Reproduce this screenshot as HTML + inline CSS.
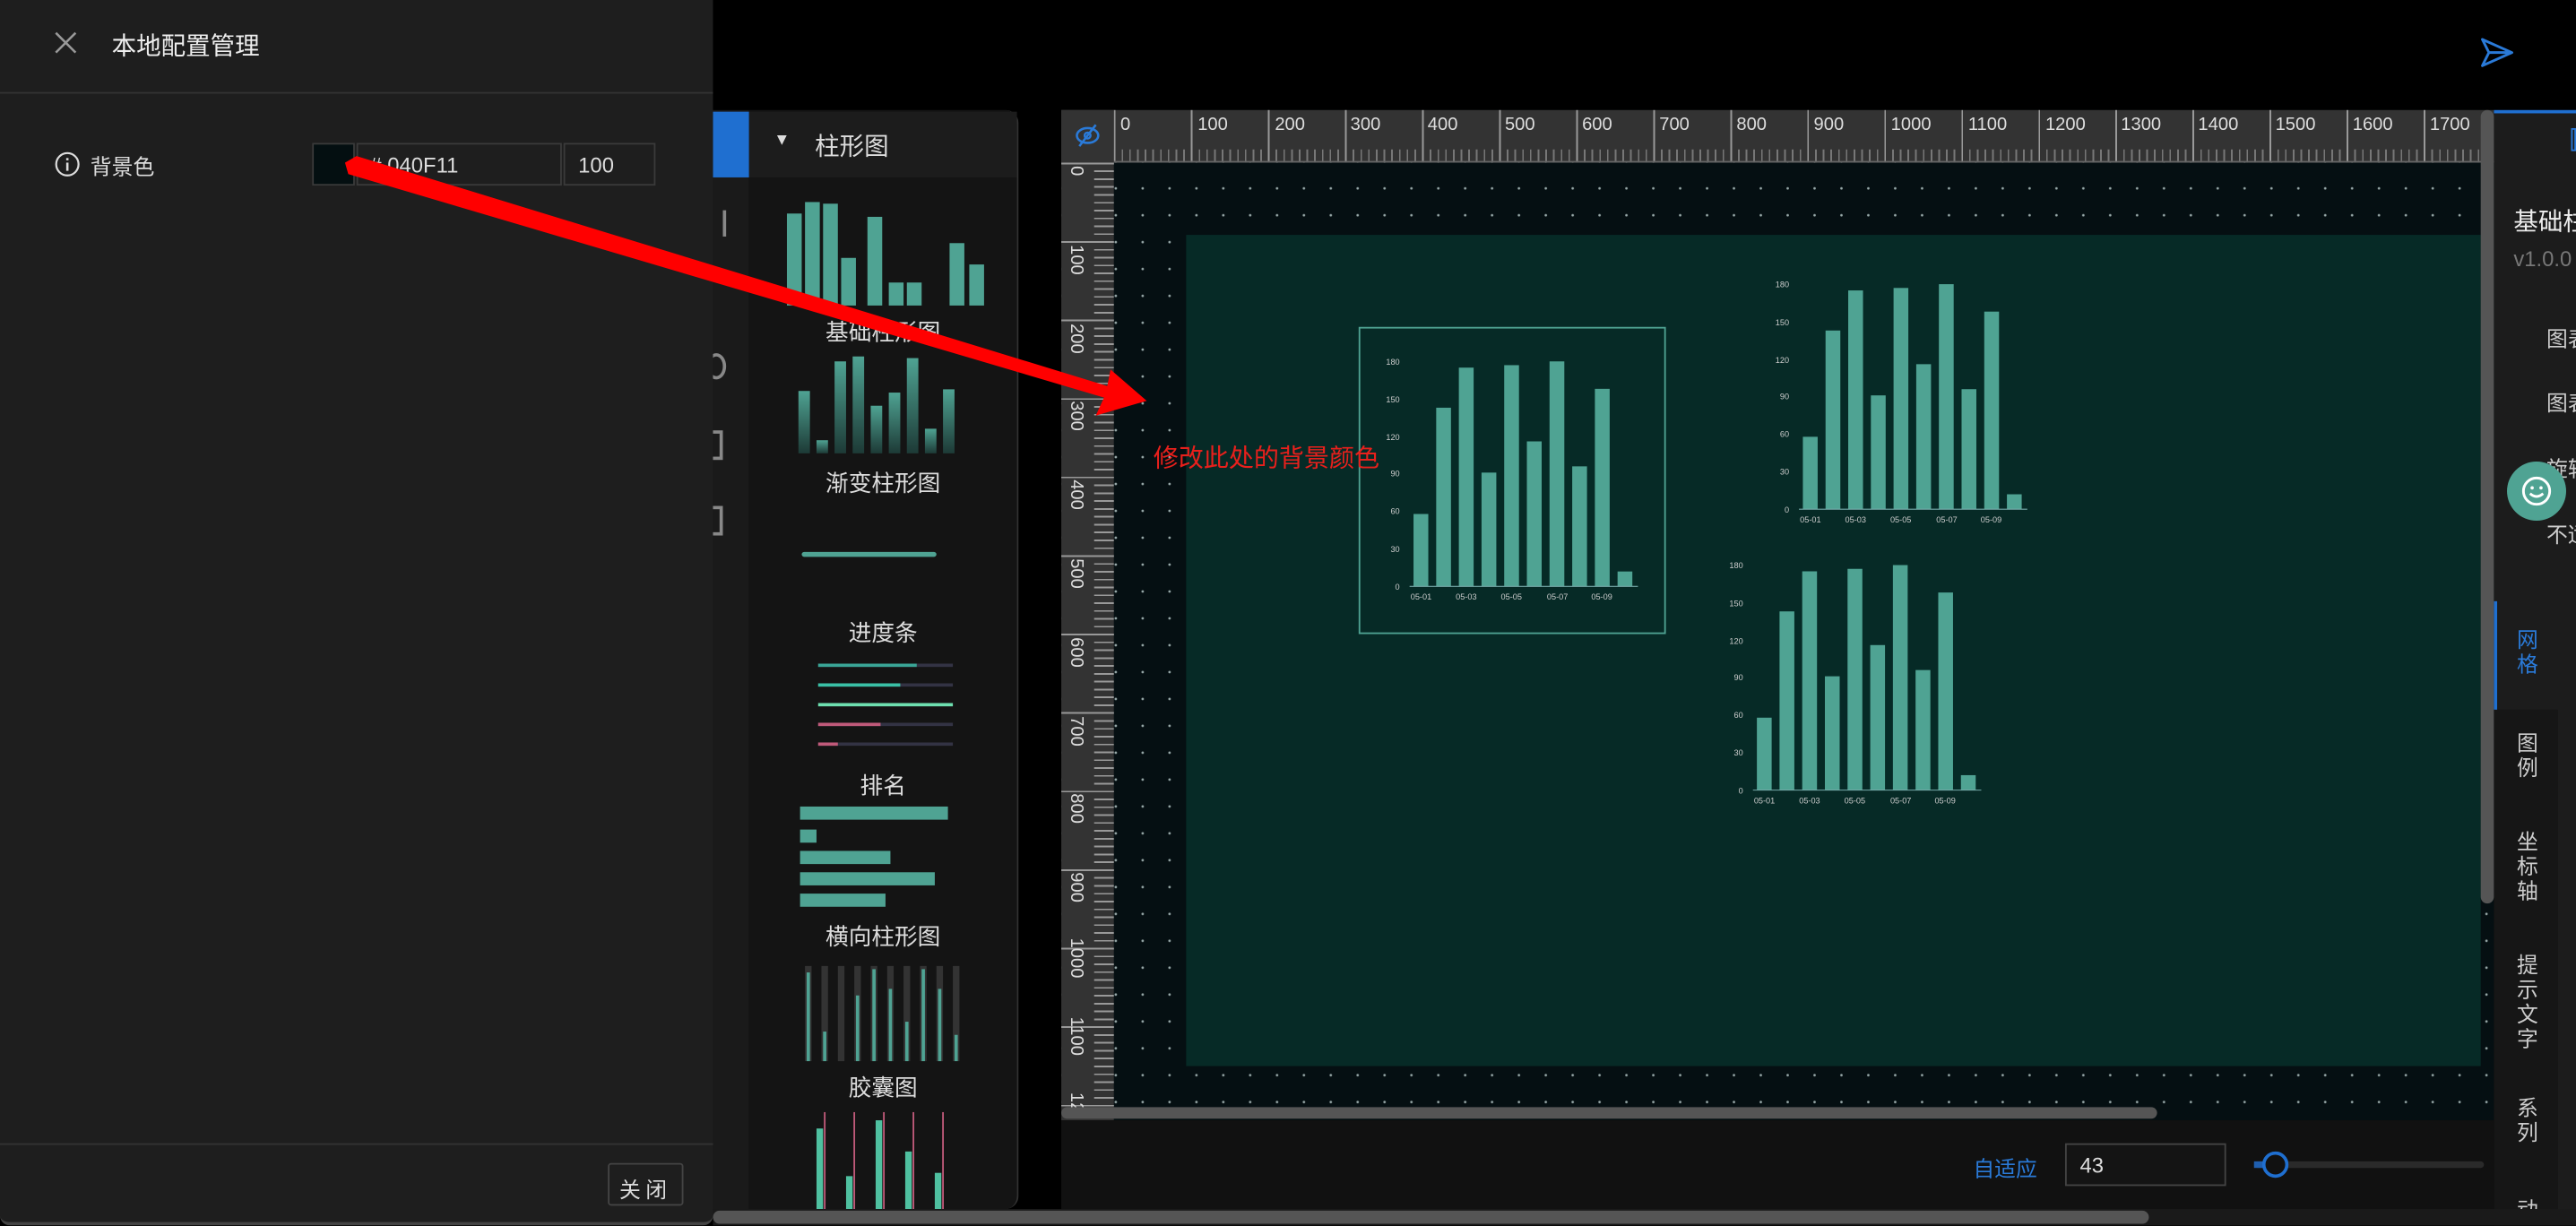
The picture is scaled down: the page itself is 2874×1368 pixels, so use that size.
<!DOCTYPE html>
<html><head><meta charset="utf-8">
<style>
*{margin:0;padding:0;box-sizing:border-box}
html,body{width:2874px;height:1368px;overflow:hidden;background:#000}
#w{position:absolute;left:0;top:0;width:1568px;height:746px;transform:scale(1.83291);transform-origin:0 0;font-family:"Liberation Sans","Noto Sans CJK SC",sans-serif;color:#ddd}
.a{position:absolute}
.t{position:absolute;white-space:nowrap}
.lbl{position:absolute;font-size:14px;color:#ddd;width:163px;text-align:center;left:456px}
</style></head><body><div id="w">

<!-- right panel -->
<div class="a" style="left:1518px;top:67px;width:50px;height:679px;background:#1c1c1c;border-top:2px solid #1f6fd0"></div>
<div class="a" style="left:1565px;top:78px;width:3px;height:14px;border:1px solid #2a7ad8"></div>
<div class="t" style="left:1530px;top:124px;font-size:15px;color:#eee">基础柱</div>
<div class="t" style="left:1530px;top:150px;font-size:13px;color:#777">v1.0.0</div>
<div class="t" style="left:1550px;top:196px;font-size:13px;color:#ccc">图表</div>
<div class="t" style="left:1550px;top:235px;font-size:13px;color:#ccc">图表</div>
<div class="t" style="left:1550px;top:275px;font-size:13px;color:#ccc">旋转</div>
<div class="t" style="left:1550px;top:315px;font-size:13px;color:#ccc">不适</div>
<div class="a" style="left:1518px;top:432px;width:39px;height:314px;background:#161616"></div>
<div class="a" style="left:1518px;top:366px;width:2px;height:66px;background:#1f6fd0"></div>
<div class="t" style="left:1532px;top:382px;font-size:13px;line-height:15px;color:#2a7ad8;width:14px;white-space:normal">网格</div>
<div class="t" style="left:1532px;top:445px;font-size:13px;line-height:15px;color:#ccc;width:14px;white-space:normal">图例</div>
<div class="t" style="left:1532px;top:505px;font-size:13px;line-height:15px;color:#ccc;width:14px;white-space:normal">坐标轴</div>
<div class="t" style="left:1532px;top:580px;font-size:13px;line-height:15px;color:#ccc;width:14px;white-space:normal">提示文字</div>
<div class="t" style="left:1532px;top:667px;font-size:13px;line-height:15px;color:#ccc;width:14px;white-space:normal">系列</div>
<div class="t" style="left:1532px;top:729px;font-size:13px;line-height:15px;color:#ccc">动</div>
<div class="a" style="left:1526px;top:281px;width:36px;height:36px;border-radius:50%;background:#4fa393"></div>
<svg class="a" style="left:1533px;top:288px" width="22" height="22" viewBox="0 0 22 22"><circle cx="11" cy="11" r="8" fill="none" stroke="#fff" stroke-width="1.6"/><path d="M7 12.5q4 3.5 8 0" fill="none" stroke="#fff" stroke-width="1.6"/><circle cx="8.3" cy="9" r="1" fill="#fff"/><circle cx="13.7" cy="9" r="1" fill="#fff"/></svg>
<svg class="a" style="left:1509px;top:22px" width="22" height="20" viewBox="0 0 22 20"><path d="M2 2L20 10L2 18L6 10Z M6 10H20" fill="none" stroke="#2a7ad8" stroke-width="1.6" stroke-linejoin="round"/></svg>

<!-- canvas -->
<div class="a" style="left:646px;top:67px;width:872px;height:615px;background:#050f12;background-image:radial-gradient(circle,#9aa 0.6px,transparent 0.9px);background-size:16.37px 16.37px;background-position:25px 39.5px"></div>
<div class="a" style="left:722px;top:143px;width:788px;height:506px;background:#062a26"></div>
<div class="a" style="left:646px;top:67px;width:872px;height:32px;background:#333"></div>
<div class="a" style="left:646px;top:67px;width:32px;height:615px;background:#333"></div>
<div class="a" style="left:678px;top:88px;width:832px;height:11px;background-image:repeating-linear-gradient(90deg,#888 0 1px,transparent 1px 4.69px);opacity:.8;clip-path:inset(3px 0 0 0)"></div>
<div class="a" style="left:678px;top:67px;width:832px;height:32px;background-image:repeating-linear-gradient(90deg,#999 0 1px,transparent 1px 46.9px)"></div>
<div class="a" style="left:666px;top:99px;width:12px;height:575px;background-image:repeating-linear-gradient(180deg,#999 0 1px,transparent 1px 4.78px)"></div>
<div class="a" style="left:646px;top:99px;width:32px;height:575px;background-image:repeating-linear-gradient(180deg,#999 0 1px,transparent 1px 47.8px)"></div>
<div class="a" style="left:646px;top:98px;width:872px;height:1px;background:#666"></div>
<div style="position:absolute;left:0;top:0;font-size:11px;color:#ddd">
<span class="t" style="left:682px;top:70px">0</span><span class="t" style="left:729px;top:70px">100</span><span class="t" style="left:776px;top:70px">200</span><span class="t" style="left:822px;top:70px">300</span><span class="t" style="left:869px;top:70px">400</span><span class="t" style="left:916px;top:70px">500</span><span class="t" style="left:963px;top:70px">600</span><span class="t" style="left:1010px;top:70px">700</span><span class="t" style="left:1057px;top:70px">800</span><span class="t" style="left:1104px;top:70px">900</span><span class="t" style="left:1151px;top:70px">1000</span><span class="t" style="left:1198px;top:70px">1100</span><span class="t" style="left:1245px;top:70px">1200</span><span class="t" style="left:1291px;top:70px">1300</span><span class="t" style="left:1338px;top:70px">1400</span><span class="t" style="left:1385px;top:70px">1500</span><span class="t" style="left:1432px;top:70px">1600</span><span class="t" style="left:1479px;top:70px">1700</span>
</div>
<div style="position:absolute;left:0;top:0;font-size:11px;color:#ddd">
<span class="t" style="top:101px;transform:rotate(90deg);transform-origin:0 0;left:661px">0</span>
<span class="t" style="left:661px;top:149px;transform:rotate(90deg);transform-origin:0 0">100</span>
<span class="t" style="left:661px;top:197px;transform:rotate(90deg);transform-origin:0 0">200</span>
<span class="t" style="left:661px;top:244px;transform:rotate(90deg);transform-origin:0 0">300</span>
<span class="t" style="left:661px;top:292px;transform:rotate(90deg);transform-origin:0 0">400</span>
<span class="t" style="left:661px;top:340px;transform:rotate(90deg);transform-origin:0 0">500</span>
<span class="t" style="left:661px;top:388px;transform:rotate(90deg);transform-origin:0 0">600</span>
<span class="t" style="left:661px;top:436px;transform:rotate(90deg);transform-origin:0 0">700</span>
<span class="t" style="left:661px;top:483px;transform:rotate(90deg);transform-origin:0 0">800</span>
<span class="t" style="left:661px;top:531px;transform:rotate(90deg);transform-origin:0 0">900</span>
<span class="t" style="left:661px;top:571px;transform:rotate(90deg);transform-origin:0 0">1000</span>
<span class="t" style="left:661px;top:619px;transform:rotate(90deg);transform-origin:0 0">1100</span>
<span class="t" style="left:661px;top:665px;transform:rotate(90deg);transform-origin:0 0">12</span>
</div>
<div class="a" style="left:646px;top:67px;width:32px;height:32px;background:#333"></div>
<svg class="a" style="left:654px;top:74px" width="16" height="16" viewBox="0 0 16 16"><ellipse cx="8" cy="8.5" rx="6.5" ry="4.5" fill="none" stroke="#2a7ad8" stroke-width="1.4"/><circle cx="8" cy="8.5" r="1.8" fill="none" stroke="#2a7ad8" stroke-width="1.3"/><path d="M13 2L3 15" stroke="#2a7ad8" stroke-width="1.4"/></svg>
<div class="a" style="left:1510px;top:67px;width:8px;height:483px;background:#555;border-radius:4px"></div>
<div class="a" style="left:646px;top:674px;width:667px;height:7px;background:#555;border-radius:4px"></div>

<!-- charts -->
<div class="a" style="left:827px;top:199px;width:187px;height:187px;border:1px solid #4fa393"></div>
<svg class="a" style="left:838px;top:210px" width="160" height="160" viewBox="0 0 160 160"><g fill="#4fa393"><rect x="22.4" y="102.9" width="9" height="44.1"/><rect x="36.2" y="38.2" width="9" height="108.8"/><rect x="50" y="13.8" width="9" height="133.2"/><rect x="63.8" y="77.7" width="9" height="69.3"/><rect x="77.6" y="12.3" width="9" height="134.7"/><rect x="91.4" y="58.7" width="9" height="88.3"/><rect x="105.2" y="10" width="9" height="137"/><rect x="119" y="73.9" width="9" height="73.1"/><rect x="132.8" y="26.7" width="9" height="120.3"/><rect x="146.6" y="137.9" width="9" height="9.1"/></g><line x1="20" y1="147" x2="159" y2="147" stroke="#7aa" stroke-width=".6"/><g fill="#ccc" font-size="5" text-anchor="end" font-family="Liberation Sans"><text x="14" y="12">180</text><text x="14" y="35">150</text><text x="14" y="58">120</text><text x="14" y="80">90</text><text x="14" y="103">60</text><text x="14" y="126">30</text><text x="14" y="149">0</text></g><g fill="#ccc" font-size="5" text-anchor="middle" font-family="Liberation Sans"><text x="27" y="155">05-01</text><text x="54.5" y="155">05-03</text><text x="82" y="155">05-05</text><text x="110" y="155">05-07</text><text x="137" y="155">05-09</text></g></svg>
<svg class="a" style="left:1075px;top:163px" width="160" height="160" viewBox="0 0 160 160"><g fill="#4fa393"><rect x="22.4" y="102.9" width="9" height="44.1"/><rect x="36.2" y="38.2" width="9" height="108.8"/><rect x="50" y="13.8" width="9" height="133.2"/><rect x="63.8" y="77.7" width="9" height="69.3"/><rect x="77.6" y="12.3" width="9" height="134.7"/><rect x="91.4" y="58.7" width="9" height="88.3"/><rect x="105.2" y="10" width="9" height="137"/><rect x="119" y="73.9" width="9" height="73.1"/><rect x="132.8" y="26.7" width="9" height="120.3"/><rect x="146.6" y="137.9" width="9" height="9.1"/></g><line x1="20" y1="147" x2="159" y2="147" stroke="#7aa" stroke-width=".6"/><g fill="#ccc" font-size="5" text-anchor="end" font-family="Liberation Sans"><text x="14" y="12">180</text><text x="14" y="35">150</text><text x="14" y="58">120</text><text x="14" y="80">90</text><text x="14" y="103">60</text><text x="14" y="126">30</text><text x="14" y="149">0</text></g><g fill="#ccc" font-size="5" text-anchor="middle" font-family="Liberation Sans"><text x="27" y="155">05-01</text><text x="54.5" y="155">05-03</text><text x="82" y="155">05-05</text><text x="110" y="155">05-07</text><text x="137" y="155">05-09</text></g></svg>
<svg class="a" style="left:1047px;top:334px" width="160" height="160" viewBox="0 0 160 160"><g fill="#4fa393"><rect x="22.4" y="102.9" width="9" height="44.1"/><rect x="36.2" y="38.2" width="9" height="108.8"/><rect x="50" y="13.8" width="9" height="133.2"/><rect x="63.8" y="77.7" width="9" height="69.3"/><rect x="77.6" y="12.3" width="9" height="134.7"/><rect x="91.4" y="58.7" width="9" height="88.3"/><rect x="105.2" y="10" width="9" height="137"/><rect x="119" y="73.9" width="9" height="73.1"/><rect x="132.8" y="26.7" width="9" height="120.3"/><rect x="146.6" y="137.9" width="9" height="9.1"/></g><line x1="20" y1="147" x2="159" y2="147" stroke="#7aa" stroke-width=".6"/><g fill="#ccc" font-size="5" text-anchor="end" font-family="Liberation Sans"><text x="14" y="12">180</text><text x="14" y="35">150</text><text x="14" y="58">120</text><text x="14" y="80">90</text><text x="14" y="103">60</text><text x="14" y="126">30</text><text x="14" y="149">0</text></g><g fill="#ccc" font-size="5" text-anchor="middle" font-family="Liberation Sans"><text x="27" y="155">05-01</text><text x="54.5" y="155">05-03</text><text x="82" y="155">05-05</text><text x="110" y="155">05-07</text><text x="137" y="155">05-09</text></g></svg>
<div class="t" style="left:702px;top:267px;font-size:15.3px;color:#e8201c">修改此处的背景颜色</div>

<!-- bottom bar -->
<div class="a" style="left:646px;top:682px;width:872px;height:64px;background:#111"></div>
<div class="t" style="left:1201px;top:701px;font-size:13px;color:#2a7ad8">自适应</div>
<div class="a" style="left:1257px;top:696px;width:98px;height:26px;border:1px solid #444;background:#141414;font-size:13px;color:#ddd;padding:5px 0 0 8px">43</div>
<div class="a" style="left:1372px;top:707px;width:140px;height:4px;background:#2a2a2a;border-radius:2px"></div>
<div class="a" style="left:1372px;top:707px;width:14px;height:4px;background:#1f5fb0"></div>
<div class="a" style="left:1377px;top:701px;width:16px;height:16px;border-radius:50%;border:2px solid #1f6fd0;background:#111"></div>

<!-- icon bar -->
<div class="a" style="left:434px;top:67px;width:22px;height:669px;background:#1a1a1a"></div>
<div class="a" style="left:434px;top:68px;width:22px;height:40px;background:#1f6fd0"></div>
<div class="a" style="left:434px;top:128px;width:8px;height:16px;border-right:2px solid #888"></div>
<div class="a" style="left:430px;top:215px;width:12px;height:16px;border:2px solid #888;border-radius:50%"></div>
<div class="a" style="left:430px;top:262px;width:10px;height:18px;border:2px solid #888"></div>
<div class="a" style="left:430px;top:308px;width:10px;height:18px;border:2px solid #888"></div>

<!-- component panel -->
<div class="a" style="left:456px;top:67px;width:164px;height:669px;background:#141414;border-radius:0 8px 8px 0;border-right:1px solid #333"></div>
<div class="a" style="left:456px;top:68px;width:163px;height:40px;background:#1c1c1c"></div>
<div class="t" style="left:471px;top:80px;font-size:10px;color:#ddd">▼</div>
<div class="t" style="left:496px;top:78px;font-size:15px;color:#ddd">柱形图</div>
<svg class="a" style="left:476px;top:118px" width="126" height="70"><g fill="#4fa393"><rect x="3" y="12" width="9" height="56"/><rect x="14" y="5" width="9" height="63"/><rect x="25" y="6" width="9" height="62"/><rect x="36" y="39" width="9" height="29"/><rect x="52" y="14" width="9" height="54"/><rect x="65" y="54" width="9" height="14"/><rect x="76" y="54" width="9" height="14"/><rect x="102" y="30" width="9" height="38"/><rect x="114" y="43" width="9" height="25"/></g></svg>
<div class="lbl" style="top:192px">基础柱形图</div>
<svg class="a" style="left:484px;top:212px" width="106" height="66"><defs><linearGradient id="g" x1="0" y1="0" x2="0" y2="1"><stop offset="0" stop-color="#4fa393"/><stop offset="1" stop-color="#1d3a36"/></linearGradient></defs><g fill="url(#g)"><rect x="2" y="26" width="7" height="38"/><rect x="13" y="56" width="7" height="8"/><rect x="24" y="8" width="7" height="56"/><rect x="35" y="5" width="7" height="59"/><rect x="46" y="35" width="7" height="29"/><rect x="57" y="27" width="7" height="37"/><rect x="68" y="6" width="7" height="58"/><rect x="79" y="49" width="7" height="15"/><rect x="90" y="25" width="7" height="39"/></g></svg>
<div class="lbl" style="top:284px">渐变柱形图</div>
<div class="a" style="left:488px;top:336px;width:82px;height:3px;background:#4fa393;border-radius:2px"></div>
<div class="lbl" style="top:375px">进度条</div>
<div class="a" style="left:498px;top:404px;width:82px;height:2px;background:#334"></div><div class="a" style="left:498px;top:404px;width:60px;height:2px;background:#3aa596"></div>
<div class="a" style="left:498px;top:416px;width:82px;height:2px;background:#334"></div><div class="a" style="left:498px;top:416px;width:50px;height:2px;background:#3ac0a6"></div>
<div class="a" style="left:498px;top:428px;width:82px;height:2px;background:#6ee0b0"></div>
<div class="a" style="left:498px;top:440px;width:82px;height:2px;background:#334"></div><div class="a" style="left:498px;top:440px;width:38px;height:2px;background:#c05a7a"></div>
<div class="a" style="left:498px;top:452px;width:82px;height:2px;background:#334"></div><div class="a" style="left:498px;top:452px;width:12px;height:2px;background:#c05a7a"></div>
<div class="lbl" style="top:468px">排名</div>
<div class="a" style="left:487px;top:491px;width:90px;height:8px;background:#4fa393"></div>
<div class="a" style="left:487px;top:505px;width:10px;height:8px;background:#4fa393"></div>
<div class="a" style="left:487px;top:518px;width:55px;height:8px;background:#4fa393"></div>
<div class="a" style="left:487px;top:531px;width:82px;height:8px;background:#4fa393"></div>
<div class="a" style="left:487px;top:544px;width:52px;height:8px;background:#4fa393"></div>
<div class="lbl" style="top:560px">横向柱形图</div>
<svg class="a" style="left:488px;top:588px" width="100" height="60"><g fill="#333"><rect x="2" y="0" width="4" height="58"/><rect x="12" y="0" width="4" height="58"/><rect x="22" y="0" width="4" height="58"/><rect x="32" y="0" width="4" height="58"/><rect x="42" y="0" width="4" height="58"/><rect x="52" y="0" width="4" height="58"/><rect x="62" y="0" width="4" height="58"/><rect x="72" y="0" width="4" height="58"/><rect x="82" y="0" width="4" height="58"/><rect x="92" y="0" width="4" height="58"/></g><g fill="#4fa393"><rect x="3" y="4" width="2" height="54"/><rect x="13" y="40" width="2" height="18"/><rect x="33" y="18" width="2" height="40"/><rect x="43" y="2" width="2" height="56"/><rect x="53" y="14" width="2" height="44"/><rect x="63" y="34" width="2" height="24"/><rect x="73" y="2" width="2" height="56"/><rect x="83" y="14" width="2" height="44"/><rect x="93" y="42" width="2" height="16"/></g></svg>
<div class="lbl" style="top:652px">胶囊图</div>
<svg class="a" style="left:490px;top:677px" width="100" height="59"><g stroke="#c05a7a" stroke-width="1"><line x1="12" y1="0" x2="12" y2="59"/><line x1="30" y1="0" x2="30" y2="59"/><line x1="48" y1="0" x2="48" y2="59"/><line x1="66" y1="0" x2="66" y2="59"/><line x1="84" y1="0" x2="84" y2="59"/></g><g fill="#4fc0a0"><rect x="7" y="10" width="4" height="49"/><rect x="25" y="39" width="4" height="20"/><rect x="43" y="5" width="4" height="54"/><rect x="61" y="24" width="4" height="35"/><rect x="79" y="37" width="4" height="22"/></g></svg>

<div class="a" style="left:434px;top:736px;width:1134px;height:10px;background:#1a1a1a"></div>
<div class="a" style="left:434px;top:737px;width:874px;height:8px;background:#555;border-radius:4px"></div>

<!-- drawer -->
<div class="a" style="left:0;top:0;width:434px;height:746px;background:#1e1e1e;border-bottom:2px solid #444;border-radius:0 0 6px 6px"></div>
<div class="a" style="left:0;top:56px;width:434px;height:1px;background:#333"></div>
<svg class="a" style="left:33px;top:19px" width="14" height="14"><path d="M1 1L13 13M13 1L1 13" stroke="#999" stroke-width="1.4"/></svg>
<div class="t" style="left:68px;top:17px;font-size:15px;color:#eee">本地配置管理</div>
<svg class="a" style="left:33px;top:92px" width="16" height="16"><circle cx="8" cy="8" r="6.8" fill="none" stroke="#ddd" stroke-width="1.2"/><rect x="7.3" y="7" width="1.4" height="5" fill="#ddd"/><rect x="7.3" y="4.2" width="1.4" height="1.4" fill="#ddd"/></svg>
<div class="t" style="left:55px;top:91px;font-size:13px;color:#ddd">背景色</div>
<div class="a" style="left:190px;top:87px;width:26px;height:26px;background:#040f11;border:1px solid #3a3a3a"></div>
<div class="a" style="left:217px;top:87px;width:125px;height:26px;border:1px solid #3a3a3a;font-size:13px;color:#ddd;padding:5px 0 0 7px">#&nbsp;040F11</div>
<div class="a" style="left:343px;top:87px;width:56px;height:26px;border:1px solid #3a3a3a;font-size:13px;color:#ddd;padding:5px 0 0 8px">100</div>
<div class="a" style="left:0;top:696px;width:434px;height:1px;background:#333"></div>
<div class="a" style="left:370px;top:708px;width:46px;height:26px;border:1px solid #444;border-radius:2px;font-size:13px;color:#ddd;text-align:center;padding-top:5px;letter-spacing:3px">关闭</div>

<!-- red arrow -->
<svg class="a" style="left:0;top:0" width="1568" height="746"><path d="M210 99L212 106L672 242L667 253L698 244L676 225L674 235L217 95Z" fill="#f00"/></svg>
</div></body></html>
